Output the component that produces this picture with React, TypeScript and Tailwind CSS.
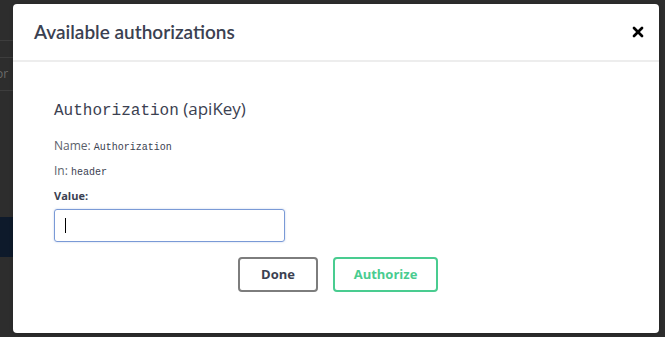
import { X } from 'lucide-react'

export default function App() {
  return (
    <div className="w-[665px] h-[337px] bg-[#2d2d2d] flex overflow-hidden" style={{ fontFamily: '"Open Sans", sans-serif' }}>
      {/* dimmed page behind the modal */}
      <div className="w-[13px] shrink-0 flex flex-col">
        <div className="h-[40px]" />
        <div className="h-px bg-[#3d3d3d]" />
        <div className="h-[16px]" />
        <div className="h-px bg-[#3d3d3d]" />
        <div className="h-[32px] text-[12px] leading-[32px] text-[#6b6b6b] whitespace-nowrap overflow-hidden">
          <span className="-ml-[4px] inline-block">or</span>
        </div>
        <div className="h-px bg-[#3d3d3d]" />
        <div className="h-[126px]" />
        <div className="h-[40px] bg-[#0e1a2b]" />
      </div>

      {/* modal */}
      <div className="mt-[4px] mb-[4px] w-[646px] bg-white rounded-[4px] shadow-[0_1px_4px_rgba(0,0,0,0.2)] flex flex-col">
        <div className="h-[58px] flex items-center justify-between pl-[21px] pr-[13px] border-b-2 border-[#ededed]">
          <h4 className="text-[19px] font-semibold text-[#3b4151]" style={{ fontFamily: 'Lato, sans-serif' }}>Available authorizations</h4>
          <X className="w-[16px] h-[16px] text-black" strokeWidth={4} />
        </div>
        <div className="pl-[41px] pt-[37px] flex flex-col">
          <h4 className="text-[17px] font-medium text-[#3b4151] leading-[20px]">
            <span className="text-[16px]" style={{ fontFamily: '"Liberation Mono", monospace' }}>Authorization</span> (apiKey)
          </h4>
          <div className="mt-[17px] text-[12px] text-[#5b5f6b] leading-[16px]">
            Name: <code className="text-[10px] text-[#3b4151]" style={{ fontFamily: '"Liberation Mono", monospace' }}>Authorization</code>
          </div>
          <div className="mt-[7px] text-[12px] text-[#5b5f6b] leading-[16px]">
            In: <code className="text-[10px] text-[#3b4151]" style={{ fontFamily: '"Liberation Mono", monospace' }}>header</code>
          </div>
          <label className="mt-[8px] text-[11px] font-bold text-[#3b4151] leading-[14px]">Value:</label>
          <div className="mt-[6px] w-[231px] h-[33px] border border-[#7a9ad6] rounded-[3px] shadow-[0_0_2px_rgba(122,154,214,0.5)] flex items-center pl-[10px]">
            <div className="w-px h-[15px] bg-black" />
          </div>
          <div className="mt-[15px] flex gap-[15px] ml-[184px]">
            <button className="w-[80px] h-[35px] border-2 border-[#7d7d7d] rounded-[4px] text-[13px] font-bold text-[#3b4151]">
              Done
            </button>
            <button className="w-[105px] h-[35px] border-2 border-[#49cc90] rounded-[4px] text-[13px] font-bold text-[#49cc90]">
              Authorize
            </button>
          </div>
        </div>
      </div>
    </div>
  )
}
